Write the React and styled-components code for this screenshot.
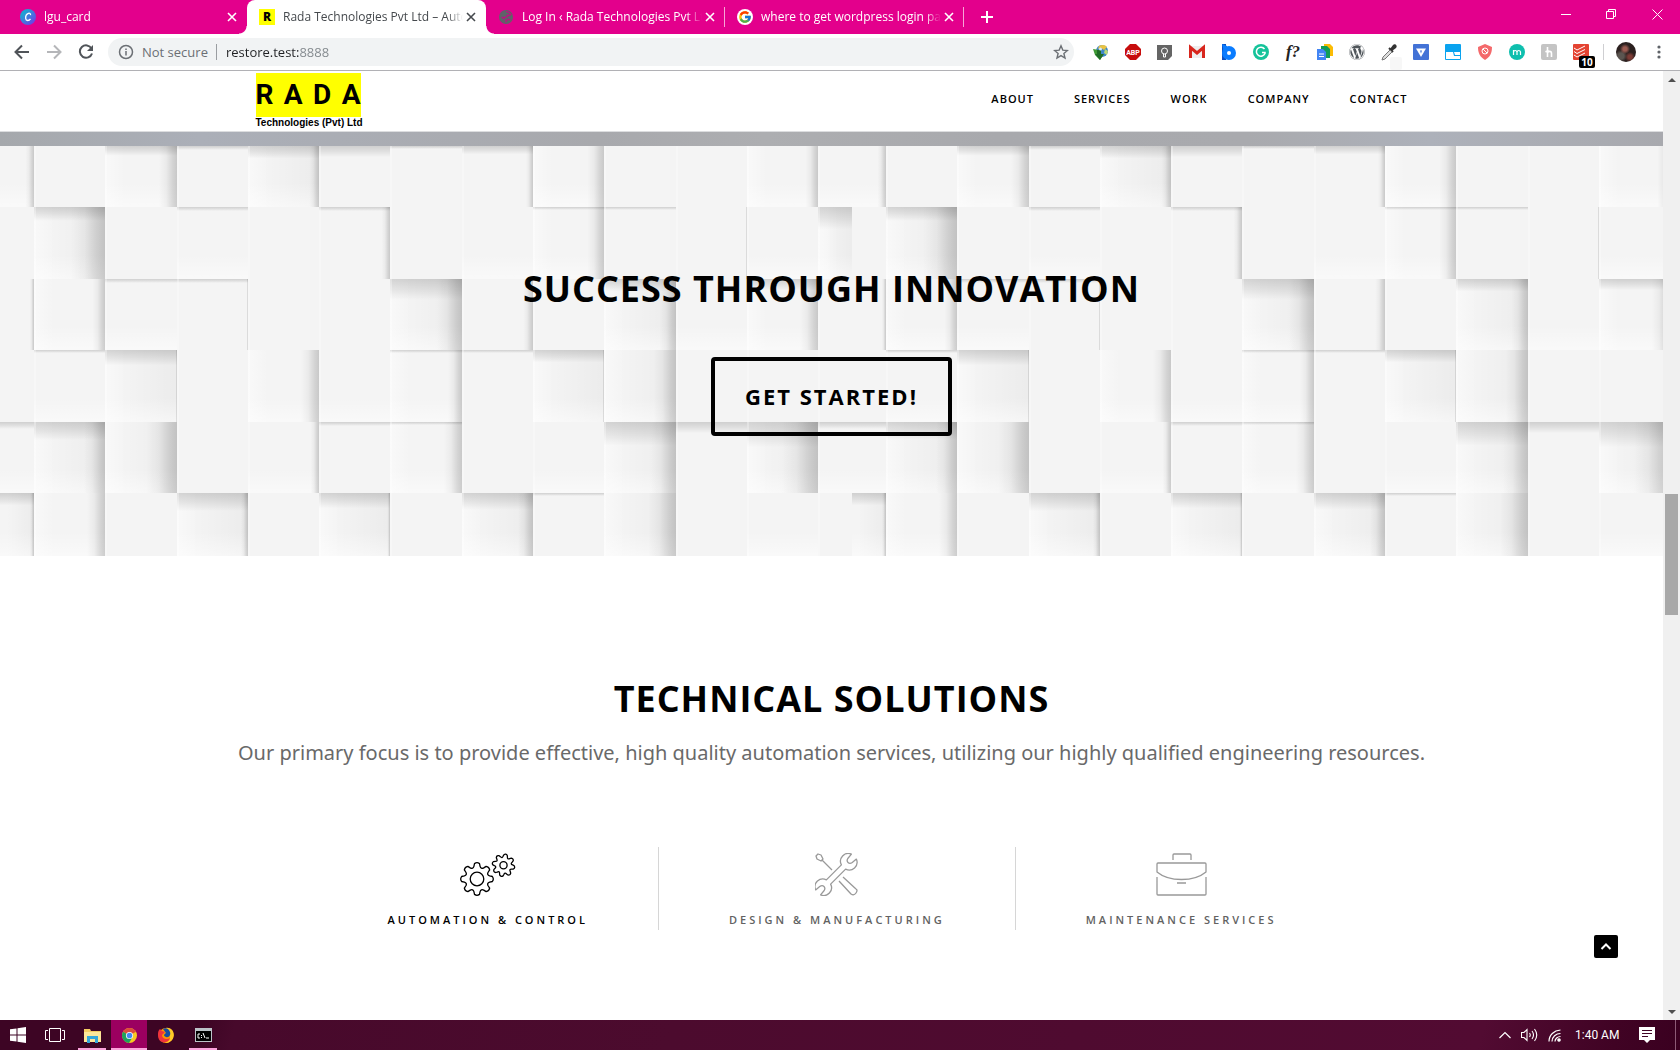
import React from "react";
import styled, { createGlobalStyle, css } from "styled-components";
import { FaWordpress } from "react-icons/fa";
import { FcGoogle } from "react-icons/fc";

const ui = `"Open Sans", "Noto Sans", sans-serif`;

const GlobalStyle = createGlobalStyle`
  *, *::before, *::after { box-sizing: border-box; }
  body { margin: 0; font-family: ${ui}; color: #000; background: #fff; }
  button, input { font: inherit; color: inherit; border: 0; padding: 0; background: none; }
  h1, h2, p, ul { margin: 0; padding: 0; }
  ul { list-style: none; }
  a { color: inherit; text-decoration: none; }
  svg { display: block; flex: none; }
`;

const Desktop = styled.div`
  display: flex;
  flex-direction: column;
  height: 100vh;
  overflow: hidden;
`;

/* ---------- browser window ---------- */

const TabStrip = styled.div`
  display: flex;
  align-items: stretch;
  height: 34px;
  flex: none;
  padding-left: 8px;
  background: #e3008c;
  color: #fff;
`;

const Tab = styled.div`
  position: relative;
  display: flex;
  align-items: center;
  width: 239px;
  padding: 0 7px 0 12px;
  color: ${(p) => (p.$active ? "#45494d" : "#fff")};
  ${(p) =>
    p.$active &&
    css`
      background: #fff;
      border-radius: 8px 8px 0 0;
      &::before,
      &::after {
        content: "";
        position: absolute;
        bottom: 0;
        width: 8px;
        height: 8px;
      }
      &::before {
        left: -8px;
        background: radial-gradient(circle at 0 0, transparent 7px, #fff 8px);
      }
      &::after {
        right: -8px;
        background: radial-gradient(circle at 100% 0, transparent 7px, #fff 8px);
      }
    `}
  ${(p) =>
    p.$divided &&
    css`
      &::after {
        content: "";
        position: absolute;
        right: 0;
        top: 7px;
        height: 20px;
        width: 1px;
        background: #f6a6d6;
      }
    `}
`;

const TabTitle = styled.button`
  display: flex;
  align-items: center;
  gap: 8px;
  flex: 1;
  min-width: 0;
  font-size: 12px;
  line-height: 16px;
  text-align: left;
`;

const TabText = styled.span`
  flex: 1;
  min-width: 0;
  white-space: nowrap;
  mask-image: linear-gradient(to right, #000 calc(100% - 16px), transparent);
`;

const IconButton = styled.button`
  display: grid;
  place-items: center;
  width: ${(p) => p.$w || 16}px;
  height: ${(p) => p.$h || 16}px;
  flex: none;
`;

const NavButton = styled(IconButton)`
  color: ${(p) => (p.$dim ? "#b5b6b9" : "#505459")};
`;

const RadaFavicon = styled.span`
  display: grid;
  place-items: center;
  width: 16px;
  height: 16px;
  background: #ff0;
  color: #000;
  font: 900 12px/16px "Open Sans", sans-serif;
`;

const GoogleDisc = styled.span`
  display: grid;
  place-items: center;
  width: 16px;
  height: 16px;
  border-radius: 50%;
  background: #fff;
`;

const WindowControls = styled.div`
  display: flex;
  margin-left: auto;
`;

const Toolbar = styled.div`
  display: flex;
  align-items: center;
  height: 37px;
  flex: none;
  padding: 0 13px 0 14px;
  background: #fff;
  border-bottom: 1px solid #b1b1b5;
`;

const NavButtons = styled.div`
  display: flex;
  gap: 16px;
  margin-right: 14px;
`;

const Omnibox = styled.form`
  display: flex;
  align-items: center;
  flex: 1;
  height: 28px;
  margin-right: 19px;
  padding: 0 5px 0 10px;
  border-radius: 14px;
  background: #f1f3f4;
  color: #6b6f74;
  font-size: 13px;
  line-height: 20px;
`;

const Security = styled.span`
  padding: 0 8px;
  margin-right: 9px;
  border-right: 1px solid #9a9da1;
  line-height: 16px;
  white-space: nowrap;
`;

const Address = styled.input`
  flex: 1;
  min-width: 0;
  outline: 0;
  color: transparent;
  caret-color: #202124;
  background: linear-gradient(to right, #202124 73px, #80868b 73px);
  background-clip: text;
  -webkit-background-clip: text;
`;

const Extensions = styled.div`
  display: flex;
  gap: 16px;
  align-items: center;
  margin-right: 14px;
`;

const Divider = styled.span`
  width: 1px;
  height: 16px;
  background: #cfcfd2;
`;

const Avatar = styled.button`
  width: 20px;
  height: 20px;
  margin: 0 15px 0 12px;
  border-radius: 50%;
  background: radial-gradient(circle at 45% 35%, #9a5a50 0 2px, transparent 5px),
    radial-gradient(circle at 70% 75%, #7c3b35 0 2px, transparent 5px),
    radial-gradient(circle at 25% 70%, #5b5550 0 3px, transparent 6px), #2b201f;
`;

/* ---------- web page ---------- */

const Viewport = styled.div`
  display: flex;
  flex: 1;
  min-height: 0;
`;

const Page = styled.div`
  position: relative;
  flex: 1;
  min-width: 0;
  overflow: hidden;
  background: #fff;
`;

const SiteHeader = styled.header`
  height: 61px;
  border-bottom: 1px solid #dcdddf;
`;

const HeaderInner = styled.div`
  display: flex;
  justify-content: space-between;
  max-width: 1152px;
  margin: 0 auto;
  padding-top: 2px;
`;

const Logo = styled.a`
  display: block;
  width: 105px;
`;

const LogoName = styled.span`
  display: flex;
  justify-content: space-between;
  height: 44px;
  background: #ff0;
  font: 700 28px/43px Roboto, "Open Sans", sans-serif;
`;

const LogoTag = styled.span`
  display: block;
  font: 700 10px/11px "Liberation Sans", Arial, sans-serif;
  white-space: nowrap;
`;

const SiteNav = styled.ul`
  display: flex;
  gap: 40px;
  padding-top: 18px;
  font-size: 11px;
  line-height: 16px;
  font-weight: 600;
  letter-spacing: 1px;
`;

const PreviousSection = styled.div`
  height: 14px;
  background: linear-gradient(to right, #a5a8ac, #abafb8 12%, #a8a9ad 36%, #adaeb1 46%, #a8a9ad 60%, #a9aaae 75%, #adb1ba 86%, #a8a9ae);
`;

const Hero = styled.section`
  position: relative;
  display: flex;
  flex-direction: column;
  align-items: center;
  height: 410px;
  padding-top: 119px;
  overflow: hidden;
`;

const HeroBackdrop = styled.svg`
  position: absolute;
  inset: 0;
  width: 100%;
  height: 100%;
`;

const Heading = styled.h2`
  position: relative;
  font-size: 36px;
  line-height: 48px;
  font-weight: 700;
  letter-spacing: 1px;
  text-align: center;
`;

const HeroButton = styled.button`
  position: relative;
  margin-top: 44px;
  padding: 20px 30px;
  border: 4px solid #000;
  border-radius: 4px;
  font-size: 22px;
  line-height: 31px;
  font-weight: 700;
  letter-spacing: 2px;
`;

const Solutions = styled.section`
  padding-top: 119px;
`;

const Lead = styled.p`
  margin-top: 14px;
  text-align: center;
  font-family: "Noto Sans", "Open Sans", sans-serif;
  font-size: 20px;
  line-height: 32px;
  color: #696969;
`;

const Features = styled.ul`
  display: flex;
  justify-content: center;
  margin-top: 78px;
`;

const Feature = styled.li`
  padding: 6px 70px 0 71px;
  height: 83px;
  & + & {
    border-left: 1px solid #d6d6d6;
    padding-left: 70px;
  }
`;

const FeatureLink = styled.a`
  display: flex;
  flex-direction: column;
  align-items: center;
  gap: 16px;
  color: ${(p) => (p.$active ? "#000" : "#626262")};
  font-size: 11px;
  line-height: 16px;
  font-weight: 600;
  letter-spacing: 3px;
  svg {
    color: ${(p) => (p.$active ? "#000" : "#999")};
  }
`;

const BackToTop = styled.button`
  position: absolute;
  right: 45px;
  bottom: 62px;
  display: grid;
  place-items: center;
  width: 24px;
  height: 23px;
  border-radius: 2px;
  background: #000;
  color: #fff;
`;

const Scrollbar = styled.div`
  display: flex;
  flex-direction: column;
  align-items: center;
  width: 17px;
  background: #f0f0f0;
`;

const ScrollTrack = styled.div`
  flex: 1;
  padding: 406px 2px 0;
  align-self: stretch;
`;

const ScrollThumb = styled.div`
  height: 121px;
  background: #a8a8a8;
`;

/* ---------- taskbar ---------- */

const Taskbar = styled.footer`
  display: flex;
  height: 30px;
  flex: none;
  background: linear-gradient(105deg, #3d0524 0 12%, #47092b 14%, #4c0b2e 40%, #520b32 88%, #400324 96%, #3a0020);
  color: #fff;
`;

const TaskButton = styled.button`
  display: grid;
  place-items: center;
  width: 36px;
  margin-right: 1px;
  background-color: ${(p) => (p.$active ? "#9b0060" : "transparent")};
  ${(p) =>
    p.$running &&
    css`
      background-image: linear-gradient(#fba3dc, #fba3dc);
      background-repeat: no-repeat;
      background-position: bottom;
      background-size: ${p.$active ? "100%" : "28px"} 2px;
    `}
`;

const Tray = styled.div`
  display: flex;
  align-items: center;
  margin-left: auto;
`;

const Clock = styled.time`
  width: 44px;
  margin: 0 20px 0 8px;
  font-size: 12px;
  line-height: 16px;
  white-space: nowrap;
  font-family: Roboto, sans-serif;
`;

const PeekEdge = styled.span`
  align-self: stretch;
  width: 1px;
  margin: 0 4px 0 20px;
  background: #8d5a76;
`;

/* ---------- drawings ---------- */

const Line = ({ w = 16, h = w, sw = 1, children, ...rest }) => (
  <svg width={w} height={h} viewBox={`0 0 ${w} ${h}`} fill="none" stroke="currentColor" strokeWidth={sw} {...rest}>
    {children}
  </svg>
);

const CloseIcon = () => (
  <Line w={10} sw={1.6}><path d="M1 1l8 8M9 1l-8 8" /></Line>
);

const CanvaIcon = () => (
  <svg width="16" height="16" viewBox="0 0 16 16">
    <defs>
      <linearGradient id="canva" x1="0" y1="0" x2="1" y2="1">
        <stop offset="0" stopColor="#00c4cc" /><stop offset=".5" stopColor="#3f7ddd" /><stop offset="1" stopColor="#7d2ae8" />
      </linearGradient>
    </defs>
    <circle cx="8" cy="8" r="8" fill="url(#canva)" />
    <path d="M10.5 6.200C10.800 4.500 9.500 4 8.500 4.300 6.500 5 5.500 7.500 5.700 9.500c.3 2.700 3.300 2.500 4.800.3" fill="none" stroke="#fff" strokeWidth="1.300" />
  </svg>
);

const GlobeIcon = () => (
  <svg width="16" height="14" viewBox="-1 0 16 14">
    <circle cx="7" cy="7" r="7" fill="#5f6368" />
    <path d="M7 1.500c2 .3 4 1 4.800 3L10 5.500 8.500 5 8 7H5.500L5 8.500 2.500 7M7 12.500v-2L9 9.500l2.500.5" fill="none" stroke="#c40c84" strokeWidth="1.200" />
  </svg>
);

const extensions = [
  ["Download manager", <>
    <circle cx="9" cy="7" r="6" fill="#3d86c9" /><path d="M6 2c3-2 7-1 8 1l-3 3-3-2-3 1z" fill="#e9c343" /><path d="M12 5l3 2-1 4-3-2z" fill="#b8d87a" /><path d="M0 5l6 1 1 4 3 1-3 5-5-5z" fill="#3f9a35" /><path d="M4 6h4v4h3l-4 6-5-6h2z" fill="#1f6d26" />
    <circle cx="7.500" cy="5" r="1.500" fill="#d9edf9" /></>],
  ["Ad blocker", <>
    <path d="M5 0h6l5 5v6l-5 5H5l-5-5V5z" fill="#c70d0d" /><text x="8" y="11" textAnchor="middle" fontSize="7" fontWeight="700" fill="#fff" fontFamily="Roboto">ABP</text></>],
  ["Ideas", <>
    <path d="M0 1h15v11l-4 4H0z" fill="#656565" /><circle cx="7.500" cy="7" r="3" fill="none" stroke="#fff" /><path d="M6.500 10v3h2v-3" fill="none" stroke="#fff" /></>],
  ["Mail", <>
    <rect y="2" width="16" height="12" fill="#eee" /><path d="M1.500 14V3.500L8 9l6.500-5.500V14" fill="none" stroke="#d8261d" strokeWidth="3" /></>],
  ["Backup", <>
    <path d="M1 0h4v16H1z" fill="#0b4fc0" /><circle cx="8" cy="9" r="4.500" fill="#fff" stroke="#0a7cff" strokeWidth="5" /><path d="M1 0l5 2v4L3 8z" fill="#0a7cff" /></>],
  ["Grammar", <>
    <circle cx="8" cy="8" r="8" fill="#15c39a" /><path d="M11.500 5A4.500 4.500 0 1 0 12 9.500V8.500H9" fill="none" stroke="#fff" strokeWidth="1.500" /></>],
  ["Font finder", <text x="8" y="13" textAnchor="middle" fontSize="17" fontStyle="italic" fontWeight="700" fill="#222" fontFamily="Liberation Serif">f?</text>],
  ["Copies", <>
    <path d="M7 0h6l3 3v9H7z" fill="#fbbc05" /><path d="M4 2h6l3 3v9H4z" fill="#0f9d58" /><path d="M0 5h6l3 3v8H0z" fill="#4285f4" /><path d="M2 10h5M2 12.500h5" stroke="#fff" /></>],
  ["WordPress", null],
  ["Colour picker", <>
    <path d="M9 5l3-4c2-2 5 1 3 3l-4 3z" fill="#333" /><path d="M8 4l4 4" stroke="#333" strokeWidth="2" /><path d="M9 6l2 2-7 7-3 1 1-3z" fill="#ddd" stroke="#777" /><rect x="9" y="13" width="12" height="13" rx="2" fill="#f7f7f7" /></>],
  ["Video", <>
    <rect width="16" height="16" rx="1" fill="#4372d6" /><path d="M3 4.500h10L8 13z" fill="#fff" /><path d="M7 6.500h2l-1 3z" fill="#4372d6" /></>],
  ["Window", <>
    <rect width="16" height="16" rx="1" fill="#0aa3ef" /><path d="M1 8h7l1 4h6v3H1zM9 8h6v3h-5z" fill="#fff" /></>],
  ["Shield", <>
    <path d="M8 0l7 3c0 6-2 10-7 13C3 13 1 9 1 3z" fill="#f4696b" /><circle cx="8" cy="7" r="3" fill="none" stroke="#fff" /><path d="M6 5l4 4" stroke="#fff" /></>],
  ["Notes", <>
    <circle cx="8" cy="8" r="8" fill="#0fbfae" /><path d="M4.500 11V6v2c.5-2 3-2 3.500 0v3V8c.5-2 3-2 3.500 0v3" fill="none" stroke="#fff" strokeWidth="1.200" /></>],
  ["Coupons", <>
    <rect width="16" height="16" rx="2" fill="#c4c4c4" /><path d="M6.500 13V3M6.500 9c.5-2 4-2.500 4 .5V13M4.500 8l3-2" fill="none" stroke="#fff" strokeWidth="1.600" /></>],
  ["Tasks", <>
    <rect width="16" height="16" rx="1" fill="#e44332" /><path d="M1 4l3 2 8-4M1 7.500l3 2 8-4M1 11l3 2 8-4" fill="none" stroke="#fff" /></>],
];

const ExtensionSlot = styled.button`
  position: relative;
  width: 16px;
  height: 16px;
  color: #50565b;
  svg { overflow: visible; }
`;

const Badge = styled.span`
  position: absolute;
  left: 6px;
  top: 12px;
  width: 16px;
  height: 12px;
  border-radius: 2px;
  background: #000;
  color: #fff;
  font-size: 10px;
  line-height: 12px;
  font-weight: 700;
  text-align: center;
`;

const xs = [0, 34, 105, 177, 248, 319, 390, 462, 533, 604, 676, 747, 818, 852];
const ys = [0, 61, 133, 204, 276, 347, 410];

/* each cell of the relief: [shadow at the right edge, shadow at the top edge] */
const relief = [
  [[6, 0], [0, 0], [13, 7], [0, 2], [7, 9], [0, 8], [0, 1], [5, 6], [12, 0], [0, 0], [0, 0], [9, 0], [0, 0]],
  [[0, 0], [24, 10], [0, 0], [0, 2], [0, 0], [6, 2], [0, 0], [0, 0], [12, 1], [0, 1], [1, 0], [0, 0], [0, 16]],
  [[3, 0], [9, 0], [0, 2], [1, 2], [0, 0], [0, 0], [18, 15], [7, 0], [0, 0], [12, 9], [0, 0], [13, 8], [0, 0]],
  [[0, 0], [0, 1], [1, 11], [0, 0], [13, 0], [0, 0], [10, 1], [0, 1], [1, 9], [16, 0], [0, 0], [0, 0], [0, 0]],
  [[0, 5], [15, 13], [22, 0], [0, 0], [6, 0], [0, 2], [13, 1], [0, 0], [0, 0], [18, 17], [0, 8], [26, 18], [0, 5]],
  [[3, 9], [13, 0], [0, 0], [5, 13], [0, 0], [2, 11], [0, 0], [11, 12], [0, 1], [20, 0], [0, 0], [0, 0], [0, 0]],
];

function Relief() {
  return (
    <HeroBackdrop aria-hidden="true">
      <defs>
        <linearGradient id="side"><stop offset="0" stopOpacity="0" /><stop offset=".4" stopOpacity=".04" /><stop offset=".75" stopOpacity=".13" /><stop offset="1" stopOpacity=".18" /></linearGradient>
        <linearGradient id="haze"><stop offset=".2" stopOpacity="0" /><stop offset="1" stopOpacity=".035" /></linearGradient>
        <linearGradient id="drop" x1="0" y1="0" x2="0" y2="1"><stop offset="0" stopOpacity=".15" /><stop offset=".5" stopOpacity=".08" /><stop offset="1" stopOpacity="0" /></linearGradient>
        <linearGradient id="shine"><stop offset="0" stopColor="#fff" stopOpacity=".45" /><stop offset="1" stopColor="#fff" stopOpacity="0" /></linearGradient>
        <linearGradient id="foot" x1="0" y1="0" x2="0" y2="1"><stop offset="0" stopColor="#fff" stopOpacity="0" /><stop offset="1" stopColor="#fff" stopOpacity=".5" /></linearGradient>
        <pattern id="tile" width="852" height="410" patternUnits="userSpaceOnUse">
          <rect width="852" height="410" fill="#f4f4f4" />
          {relief.map((row, j) =>
            row.map(([side, top], i) => {
              const x = xs[i], y = ys[j], w = xs[i + 1] - x, h = ys[j + 1] - y;
              const deep = side > 8 || top > 8;
              return (
                <g key={`${i}-${j}`}>
                  {(side > 14 || top > 8) && <rect x={x} y={y} width={w} height={h} fill="url(#haze)" />}
                  {i > 0 && deep && <rect x={x} y={y} width={20} height={h} fill="url(#shine)" />}
                  {(deep || (i + j) % 4 === 0) && <rect x={x} y={y + h - 24} width={w} height={24} fill="url(#foot)" />}
                  {top > 0 && <rect x={x} y={y} width={w} height={top < 4 ? top + 2 : top * 1.4} fill="url(#drop)" />}
                  {side > 0 && <rect x={x + w - side * 1.4} y={y} width={side * 1.4} height={h} fill="url(#side)" />}
                  {i > 0 && <path d={`M${x + 1} ${y}v${h}`} stroke="#fff" strokeOpacity=".3" strokeWidth="2" />}
                </g>
              );
            })
          )}
        </pattern>
      </defs>
      <rect width="100%" height="100%" fill="url(#tile)" />
    </HeroBackdrop>
  );
}

function gearPath(cx, cy, outer, inner, turn) {
  const at = (r, a) => `${(cx + r * Math.cos(a)).toFixed(2)} ${(cy + r * Math.sin(a)).toFixed(2)}`;
  const step = Math.PI / 4;
  let d = "";
  for (let i = 0; i < 8; i++) {
    const a = i * step + turn;
    d += `${i ? "L" : "M"}${at(inner + 1, a - 0.24)}L${at(outer - 1, a - 0.16)}Q${at(outer + 0.6, a)} ${at(outer - 1, a + 0.16)}L${at(inner + 1, a + 0.24)}Q${at(inner - 1.5, a + step / 2)} ${at(inner + 1, a + step - 0.24)}`;
  }
  return d + "Z";
}

const GearsIcon = () => (
  <Line w={56} h={43} sw={1.3} strokeLinejoin="round">
    <path d={gearPath(17, 26, 16.6, 12, 0)} /><circle cx="17" cy="26" r="6.800" />
    <path d={gearPath(43.5, 12.3, 11.6, 8.2, 0.2)} /><circle cx="43.500" cy="12.300" r="3.600" />
  </Line>
);

const ToolsIcon = () => (
  <Line w={43} sw={1.3} strokeLinejoin="round">
    <g transform="translate(21 21.500) rotate(45)">
      <path d="M-3-10.600A7.800 7.800 0 0 1-3.500-25.300L-3-20Q-2.500-17 0-17T3-20L3.500-25.300A7.800 7.800 0 0 1 3-10.600V10.600A7.800 7.800 0 0 1 3.500 25.300L3 20Q2.500 17 0 17T-3 20L-3.500 25.300A7.800 7.800 0 0 1-3 10.600Z" />
    </g>
    <path d="M1 3l2-2 3 1 2 4-2 2-4-2zM7 7l10 10M24 28l12 13q3 2 5-1t0-4L28 24" />
  </Line>
);

const BriefcaseIcon = () => (
  <Line w={51} h={43} sw={1.3} strokeLinejoin="round">
    <path d="M17 7V2q0-1 1-1h16q1 0 1 1v5M1 11q0-1 1-1h47q1 0 1 1v8C38 29 13 29 1 19zM1 24v17q0 1 1 1h47q1 0 1-1V24M21 30h9" />
  </Line>
);

const ChromeIcon = () => (
  <svg width="15" height="15" viewBox="0 0 16 16">
    <circle cx="8" cy="8" r="8" fill="#f9c922" />
    <path d="M8 8L1.100 4A8 8 0 0 1 14.900 4z" fill="#dd4b3e" />
    <path d="M8 8L1.100 4A8 8 0 0 0 7.500 16L11 10z" fill="#1fa15d" />
    <circle cx="8" cy="8" r="3.800" fill="#fff" /><circle cx="8" cy="8" r="3" fill="#4688f1" />
  </svg>
);

const FirefoxIcon = () => (
  <svg width="16" height="16" viewBox="0 0 16 16">
    <circle cx="8" cy="8.500" r="7.500" fill="#ff9500" />
    <path d="M8 1c5-1 9 4 7.500 9-1 4-5 6-8.500 6 6-2 7-8 1-15z" fill="#ffcb28" />
    <path d="M0 8C0 4 1 3 2 2l2 2 3 1-3 3c0 4 5 5 8 3-1 4-5 5-8 4S0 11 0 8z" fill="#f0343c" />
    <path d="M5 2c3-2 6 0 7 3s-1 6-4 5-2-3 0-4z" fill="#174ea0" />
  </svg>
);

const ExplorerIcon = () => (
  <svg width="17" height="15" viewBox="0 0 17 15">
    <path d="M0 1h6l1 2h10v11H0z" fill="#f5cd63" /><path d="M0 4h17v10H0z" fill="#fde79a" />
    <path d="M3 15V8h11v7h-3v-4H6v4z" fill="#35a7d9" />
  </svg>
);

const ConsoleIcon = () => (
  <svg width="17" height="14" viewBox="0 0 17 14">
    <path d="M0 0h17v14H0z" fill="#bcc3c8" /><path d="M1 3h15v10H1z" fill="#000" />
    <path d="M5 6H3v4h2M6.500 7v1M6.500 9v1M8 5l2 5M11 10h3" fill="none" stroke="#fff" />
  </svg>
);

const tabs = [
  { title: "lgu_card", icon: <CanvaIcon /> },
  { title: "Rada Technologies Pvt Ltd – Auto", icon: <RadaFavicon>R</RadaFavicon>, active: true },
  { title: "Log In ‹ Rada Technologies Pvt Lt", icon: <GlobeIcon />, divided: true },
  { title: "where to get wordpress login pas", icon: <GoogleDisc><FcGoogle size={14} /></GoogleDisc>, divided: true },
];

const features = [
  { label: "AUTOMATION & CONTROL", icon: <GearsIcon />, active: true },
  { label: "DESIGN & MANUFACTURING", icon: <ToolsIcon /> },
  { label: "MAINTENANCE SERVICES", icon: <BriefcaseIcon /> },
];

export default function App() {
  return (
    <Desktop>
      <GlobalStyle />
      <TabStrip>
        {tabs.map((t) => (
          <Tab key={t.title} $active={t.active} $divided={t.divided}>
            <TabTitle>{t.icon}<TabText>{t.title}</TabText></TabTitle>
            <IconButton aria-label="Close tab"><CloseIcon /></IconButton>
          </Tab>
        ))}
        <IconButton $w={46} $h={34} aria-label="New tab"><Line w={12} sw={2}><path d="M6 0v12M0 6h12" /></Line></IconButton>
        <WindowControls>
          <IconButton $w={45} $h={28} aria-label="Minimize"><Line w={10}><path d="M0 5.500h10" /></Line></IconButton>
          <IconButton $w={46} $h={28} aria-label="Restore"><Line w={10}><path d="M.5 2.500h7v7h-7zM2.500 2.500v-2h7v7h-2" /></Line></IconButton>
          <IconButton $w={46} $h={28} aria-label="Close"><Line w={11}><path d="M.5.500l10 10M10.500.500l-10 10" /></Line></IconButton>
        </WindowControls>
      </TabStrip>

      <Toolbar>
        <NavButtons>
          <NavButton aria-label="Back"><Line w={16} sw={2}><path d="M15 8H2M8 1.500L1.500 8 8 14.500" /></Line></NavButton>
          <NavButton $dim aria-label="Forward"><Line w={16} sw={2}><path d="M1 8h13M8 1.500L14.500 8 8 14.500" /></Line></NavButton>
          <NavButton aria-label="Reload"><Line w={16} sw={2}><path d="M13.500 4.500A6.200 6.200 0 1 0 14 9.500" /><path d="M15 1v6H9z" fill="currentColor" stroke="none" /></Line></NavButton>
        </NavButtons>
        <Omnibox>
          <Line w={16} sw={1.5}><circle cx="8" cy="8" r="6.500" /><path d="M8 7v4.500M8 4.500V6" /></Line>
          <Security>Not secure</Security>
          <Address aria-label="Address" defaultValue="restore.test:8888" />
          <IconButton type="button" aria-label="Bookmark">
            <Line w={16} sw={1.4}><path d="M8 1.800l1.800 4.300 4.600.4-3.500 3 1.100 4.500L8 11.600 4 14l1.100-4.500-3.500-3 4.600-.4z" /></Line>
          </IconButton>
        </Omnibox>
        <Extensions>
          {extensions.map(([name, art]) => (
            <ExtensionSlot key={name} aria-label={name}>
              {art ? <svg width="16" height="16" viewBox="0 0 16 16">{art}</svg> : <FaWordpress size={16} />}
              {name === "Tasks" && <Badge>10</Badge>}
            </ExtensionSlot>
          ))}
        </Extensions>
        <Divider />
        <Avatar aria-label="Profile" />
        <IconButton aria-label="Menu">
          <svg width="4" height="16" fill="#5f6368"><circle cx="2" cy="3" r="1.600" /><circle cx="2" cy="8" r="1.600" /><circle cx="2" cy="13" r="1.600" /></svg>
        </IconButton>
      </Toolbar>

      <Viewport>
        <Page>
          <SiteHeader>
            <HeaderInner>
              <Logo href="#home">
                <LogoName><span>R</span><span>A</span><span>D</span><span>A</span></LogoName>
                <LogoTag>Technologies (Pvt) Ltd</LogoTag>
              </Logo>
              <SiteNav>
                {["ABOUT", "SERVICES", "WORK", "COMPANY", "CONTACT"].map((n) => (
                  <li key={n}><a href={`#${n.toLowerCase()}`}>{n}</a></li>
                ))}
              </SiteNav>
            </HeaderInner>
          </SiteHeader>
          <PreviousSection />
          <Hero>
            <Relief />
            <Heading>SUCCESS THROUGH INNOVATION</Heading>
            <HeroButton>GET STARTED!</HeroButton>
          </Hero>
          <Solutions>
            <Heading>TECHNICAL SOLUTIONS</Heading>
            <Lead>Our primary focus is to provide effective, high quality automation services, utilizing our highly qualified engineering resources.</Lead>
            <Features>
              {features.map((f) => (
                <Feature key={f.label}>
                  <FeatureLink href="#solutions" $active={f.active}>{f.icon}<span>{f.label}</span></FeatureLink>
                </Feature>
              ))}
            </Features>
          </Solutions>
          <BackToTop aria-label="Back to top"><Line w={12} h={10} sw={2}><path d="M1.500 7L6 2.500 10.500 7" /></Line></BackToTop>
        </Page>
        <Scrollbar>
          <IconButton $w={17} $h={17} aria-label="Scroll up"><svg width="8" height="4"><path d="M0 4l4-4 4 4z" fill="#505050" /></svg></IconButton>
          <ScrollTrack><ScrollThumb /></ScrollTrack>
          <IconButton $w={17} $h={17} aria-label="Scroll down"><svg width="8" height="4"><path d="M0 0l4 4 4-4z" fill="#505050" /></svg></IconButton>
        </Scrollbar>
      </Viewport>

      <Taskbar>
        <TaskButton aria-label="Start"><svg width="16" height="16" fill="#fff"><path d="M0 2.300L6.500 1.400V7.500H0zM7.500 1.200L16 0v7.500H7.500zM0 8.500h6.500v6.100L0 13.700zM7.500 8.500H16V16l-8.500-1.200z" /></svg></TaskButton>
        <TaskButton aria-label="Task view"><Line w={20} h={14}><path d="M4.500.500h11v13h-11zM3 2.500H.5v9H3M17 2.500h2.500v9H17" /></Line></TaskButton>
        <TaskButton aria-label="File Explorer" $running><ExplorerIcon /></TaskButton>
        <TaskButton aria-label="Chrome" $active $running><ChromeIcon /></TaskButton>
        <TaskButton aria-label="Firefox"><FirefoxIcon /></TaskButton>
        <TaskButton aria-label="Command Prompt" $running><ConsoleIcon /></TaskButton>
        <Tray>
          <IconButton $w={24} aria-label="Hidden icons"><Line w={12} h={8} sw={1.2}><path d="M.5 7L6 1.500 11.500 7" /></Line></IconButton>
          <IconButton $w={24} aria-label="Volume"><Line w={17} h={14} sw={1.1}><path d="M.5 4.500H3l3-3v11l-3-3H.500zM8.500 5q1.500 2 0 4M11 3q3 4 0 8M13.500 1q4.500 6 0 12" /></Line></IconButton>
          <IconButton $w={26} aria-label="Network"><Line w={13} h={13} sw={1.2}><path d="M1 12.500C1 6 6 1.500 12.500 1M4 12.500C4 8 8 4.500 12.500 4.500M7 12.500c0-2.500 2.500-5 5.500-5" /><circle cx="11" cy="11" r="1.200" fill="currentColor" /></Line></IconButton>
          <Clock>1:40 AM</Clock>
          <IconButton aria-label="Notifications"><svg width="16" height="16"><path d="M0 0h16v13h-5l-3 3-3-3H0z" fill="#fff" /><path d="M3 3.500h10M3 6.500h10M3 9.500h6" stroke="#420626" /></svg></IconButton>
          <PeekEdge />
        </Tray>
      </Taskbar>
    </Desktop>
  );
}
